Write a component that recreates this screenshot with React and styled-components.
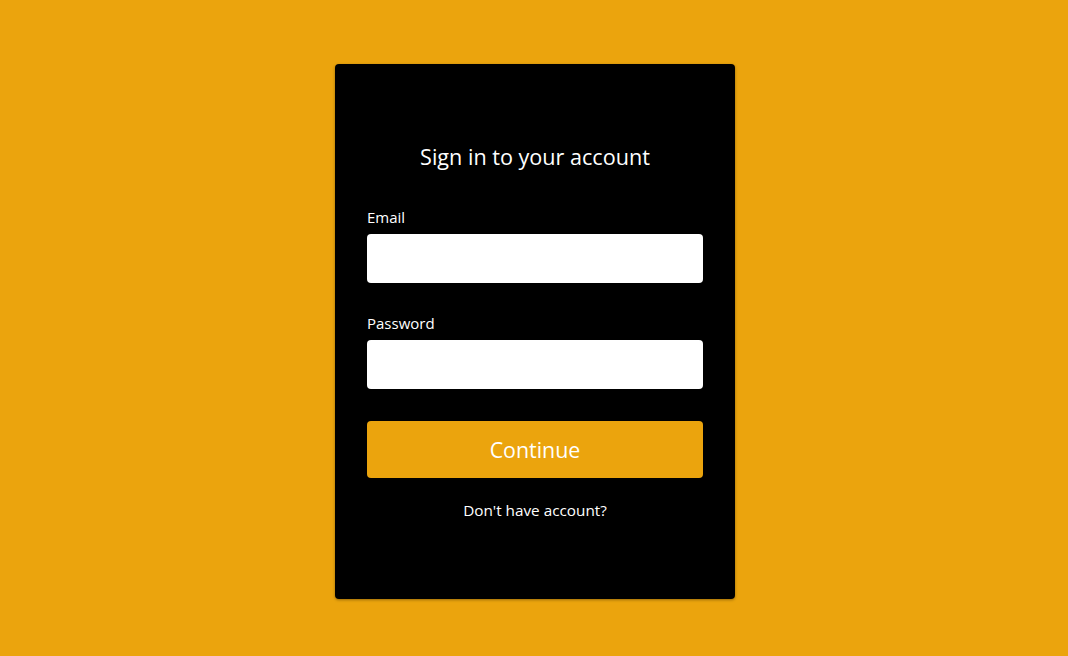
import React from 'react';
import styled, { createGlobalStyle } from 'styled-components';

const ORANGE = '#eba40d';

const GlobalStyle = createGlobalStyle`
  html, body {
    margin: 0;
    padding: 0;
    background: ${ORANGE};
    font-family: "Open Sans", "Noto Sans", sans-serif;
  }
`;

const Page = styled.div`
  min-height: 656px;
  display: flex;
  justify-content: center;
  align-items: flex-start;
  padding: 64px 0 0 2px;
  box-sizing: border-box;
`;

const Card = styled.form`
  width: 400px;
  box-sizing: border-box;
  background: #000;
  border-radius: 4px;
  box-shadow: 0 1px 3px rgba(0, 0, 0, 0.35);
  padding: 79px 32px 79px;
  display: flex;
  flex-direction: column;
`;

const Title = styled.h1`
  margin: 0 0 36px;
  font-size: 21.6px;
  line-height: 28px;
  font-weight: 400;
  color: #fff;
  text-align: center;
`;

const Label = styled.label`
  display: block;
  font-size: 15px;
  line-height: 20px;
  color: #fff;
  margin-bottom: 7px;
`;

const Field = styled.div`
  margin-bottom: ${(p) => p.$gap}px;
`;

const Input = styled.input`
  display: block;
  width: 100%;
  height: 49px;
  box-sizing: border-box;
  border: none;
  border-radius: 4px;
  background: #fff;
  padding: 0 12px;
  font-size: 16px;
  font-family: inherit;
  outline: none;
`;

const Button = styled.button`
  height: 57px;
  border: none;
  border-radius: 4px;
  background: ${ORANGE};
  color: #fff;
  font-family: inherit;
  font-size: 21.4px;
  cursor: pointer;
  margin-bottom: 22px;
`;

const Footer = styled.a`
  display: block;
  text-align: center;
  font-size: 15.3px;
  line-height: 20px;
  color: #fff;
  text-decoration: none;
`;

export default function App() {
  return (
    <>
      <GlobalStyle />
      <Page>
        <Card onSubmit={(e) => e.preventDefault()}>
          <Title>Sign in to your account</Title>
          <Field $gap={30}>
            <Label>Email</Label>
            <Input type="email" />
          </Field>
          <Field $gap={32}>
            <Label>Password</Label>
            <Input type="password" />
          </Field>
          <Button type="submit">Continue</Button>
          <Footer href="#">Don't have account?</Footer>
        </Card>
      </Page>
    </>
  );
}
